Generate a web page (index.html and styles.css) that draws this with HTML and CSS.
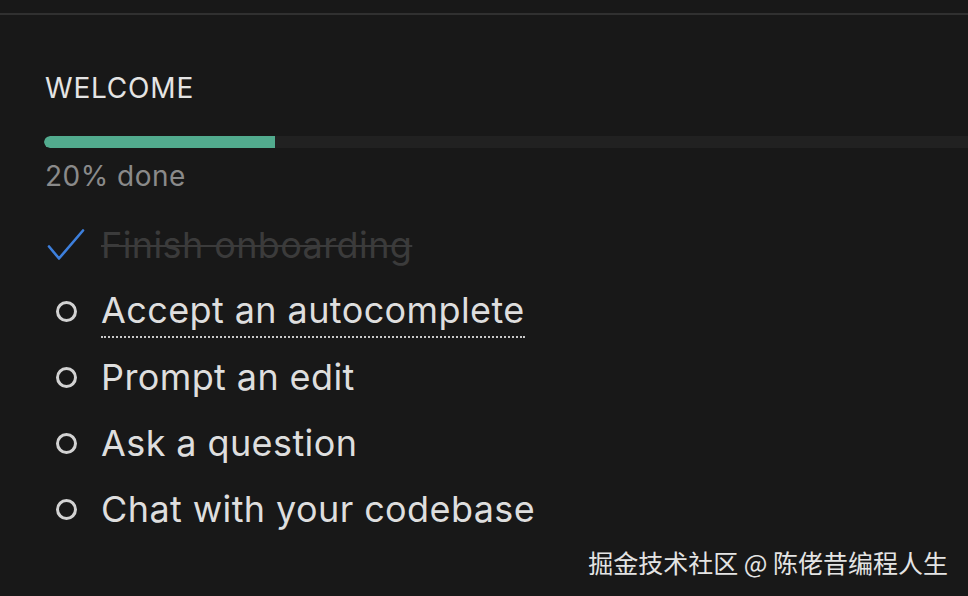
FILE: index.html
```html
<!DOCTYPE html>
<html lang="en">
<head>
  <meta charset="UTF-8" />
  <meta name="viewport" content="width=device-width, initial-scale=1.0"/>
  <title>Welcome</title>
  <link rel="stylesheet" href="styles.css">
</head>
<body>

<div class="topbar"></div>

<div class="panel">
  <h1 class="title">WELCOME</h1>

  <!-- Progress -->
  <div class="progress">
    <div class="progress-fill" style="width: 20%"></div>
  </div>
  <div class="progress-label">20% done</div>

  <!-- Checklist -->
  <ul class="checklist">
    <li class="item done">
      <span class="icon">
        <svg width="44" height="44" viewBox="0 0 44 44">
          <path d="M5 23.5 L15 35.5 L39 7.5" fill="none" stroke="#3d7fdc" stroke-width="2.6" stroke-linecap="round" stroke-linejoin="round"/>
        </svg>
      </span>
      <span class="label">Finish onboarding</span>
    </li>
    <li class="item">
      <span class="icon"><span class="circle"></span></span>
      <span class="label current">Accept an autocomplete</span>
    </li>
    <li class="item">
      <span class="icon"><span class="circle"></span></span>
      <span class="label">Prompt an edit</span>
    </li>
    <li class="item">
      <span class="icon"><span class="circle"></span></span>
      <span class="label">Ask a question</span>
    </li>
    <li class="item">
      <span class="icon"><span class="circle"></span></span>
      <span class="label">Chat with your codebase</span>
    </li>
  </ul>
</div>

<div class="watermark">掘金技术社区 @ 陈佬昔编程人生</div>

</body>
</html>
```

FILE: styles.css
```css
body {
  font-family: Inter, 'Liberation Sans', sans-serif;
  background: #181818;
  color: #d9d9d9;
  margin: 0;
  padding: 0;
  height: 596px;
  overflow: hidden;
  position: relative;
}

.topbar {
  height: 13px;
  border-bottom: 2px solid #303030;
}

.panel {
  padding: 57px 0 0 44px;
  overflow: hidden;
}

.title {
  margin: 0 0 32px 1px;
  font-size: 28px;
  line-height: 32px;
  font-weight: 400;
  letter-spacing: 0.8px;
  color: #e4e4e4;
}

.progress {
  width: 1155px;
  height: 12px;
  background: #212121;
  border-radius: 6px 0 0 6px;
  overflow: hidden;
}

.progress-fill {
  height: 100%;
  background: #52ab8e;
  border-radius: 6px 0 0 6px;
}

.progress-label {
  margin: 12px 0 0 1px;
  font-size: 28px;
  line-height: 32px;
  letter-spacing: 0.5px;
  color: #8a8a8a;
}

.checklist {
  list-style: none;
  margin: 20px 0 0;
  padding: 0;
}

.item {
  display: flex;
  align-items: center;
  gap: 13px;
  height: 66px;
  font-size: 36px;
  letter-spacing: 0.4px;
}

.icon {
  width: 44px;
  height: 44px;
  display: flex;
  align-items: center;
  justify-content: center;
  flex-shrink: 0;
}

.circle {
  width: 15px;
  height: 15px;
  border: 3px solid #d2d2d2;
  border-radius: 50%;
}

.label {
  line-height: 66px;
  color: #dedede;
}

.item.done .label {
  color: #3b3b3b;
  text-decoration: line-through;
  text-decoration-color: #3b3b3b;
  text-decoration-thickness: 2px;
}

.label.current {
  line-height: 42px;
  padding-bottom: 5px;
  margin-top: 5px;
  border-bottom: 2px dotted #c8c8c8;
}

.watermark {
  position: absolute;
  right: 20px;
  bottom: 20px;
  font-family: 'Noto Sans CJK SC', sans-serif;
  font-size: 25px;
  line-height: 28px;
  color: #e4e4e4;
}
```
